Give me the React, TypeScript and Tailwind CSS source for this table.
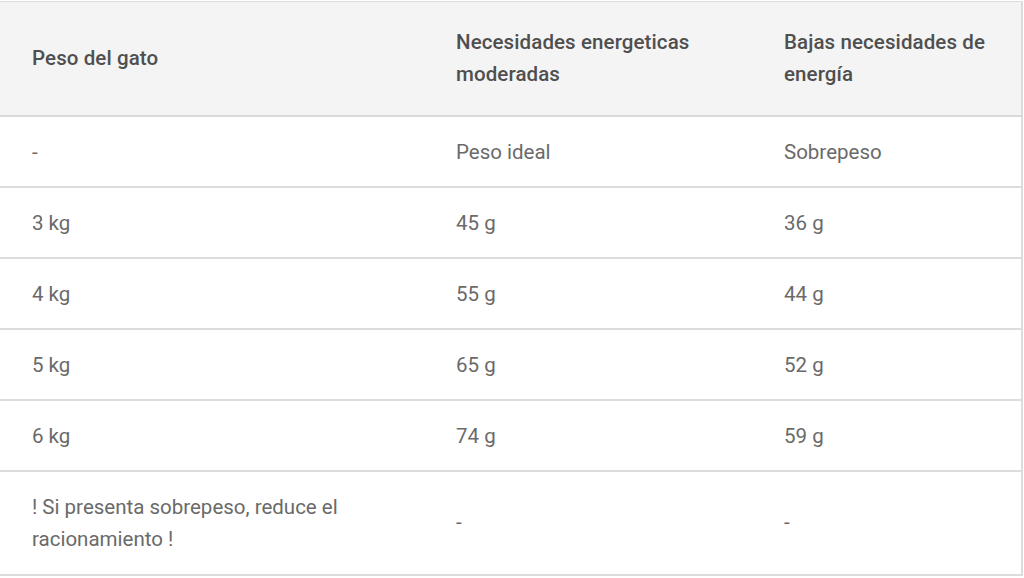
const rows = [
  ["-", "Peso ideal", "Sobrepeso"],
  ["3 kg", "45 g", "36 g"],
  ["4 kg", "55 g", "44 g"],
  ["5 kg", "65 g", "52 g"],
  ["6 kg", "74 g", "59 g"],
];

export default function App() {
  return (
    <div className="w-[1024px] h-[578px] bg-white pt-px font-['Roboto',sans-serif]">
      <table className="w-[1023px] border-collapse border-r-2 border-b-2 border-t border-[#dcdcdc] table-fixed text-[20.5px]">
        <colgroup>
          <col className="w-[424px]" />
          <col className="w-[328px]" />
          <col />
        </colgroup>
        <thead>
          <tr className="h-[114px] bg-[#f4f4f4] border-b-2 border-[#d9d9d9] text-[#4f4f4f]">
            <th className="text-left font-medium pl-8 pr-4 leading-[32px] text-[20.5px] tracking-[0.1px]">Peso del gato</th>
            <th className="text-left font-medium pl-8 pr-4 leading-[32px] text-[20.5px] tracking-[0.1px]">Necesidades energeticas moderadas</th>
            <th className="text-left font-medium pl-8 pr-4 leading-[32px] text-[20.5px] tracking-[0.1px]">Bajas necesidades de energía</th>
          </tr>
        </thead>
        <tbody className="text-[#6a6a6a] font-normal">
          {rows.map((r, i) => (
            <tr key={i} className="h-[71px] border-b-2 border-[#dcdcdc]">
              <td className="pl-8 pt-0.5">{r[0]}</td>
              <td className="pl-8 pt-0.5">{r[1]}</td>
              <td className="pl-8 pt-0.5">{r[2]}</td>
            </tr>
          ))}
          <tr className="h-[104px]">
            <td className="pl-8 pr-10 leading-[32px]">! Si presenta sobrepeso, reduce el racionamiento !</td>
            <td className="pl-8">-</td>
            <td className="pl-8">-</td>
          </tr>
        </tbody>
      </table>
    </div>
  );
}
